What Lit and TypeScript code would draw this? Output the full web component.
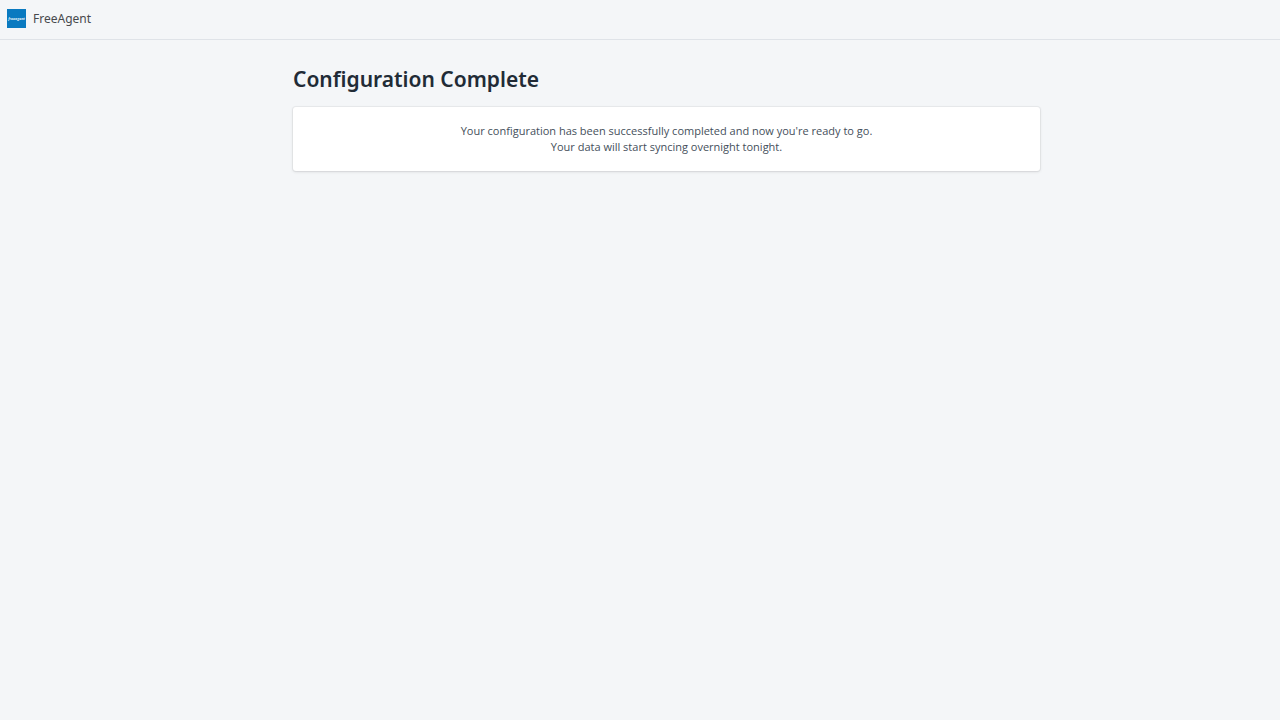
import { LitElement, html, css } from "lit";
import { customElement, property } from "lit/decorators.js";

@customElement("app-header")
class AppHeader extends LitElement {
  @property() name = "";

  static styles = css`
    :host {
      display: block;
    }
    .bar {
      display: flex;
      align-items: center;
      gap: 7px;
      padding: 8px 7px 10px;
      border-bottom: 1px solid #dfe3e8;
      color: #47494c;
      font-family: "Noto Sans", "Open Sans", sans-serif;
      font-size: 12px;
      line-height: 21px;
    }
    .logo {
      display: block;
      width: 19px;
      height: 19px;
    }
  `;

  render() {
    return html`
      <header class="bar">
        <svg class="logo" viewBox="0 0 19 19" aria-hidden="true">
          <rect width="19" height="19" fill="#0a7ac0" />
          <text x="9.5" y="10.5" text-anchor="middle" font-family="Open Sans, sans-serif" font-size="3.6" font-weight="700" font-style="italic" fill="#fff" fill-opacity="0.9">freeagent</text>
        </svg>
        <span>${this.name}</span>
      </header>
    `;
  }
}

@customElement("app-root")
class AppRoot extends LitElement {
  static styles = css`
    :host {
      display: block;
      min-height: 100vh;
      background: #f4f6f8;
      color: #454f5b;
      font-family: "Open Sans", "Noto Sans", sans-serif;
      font-size: 11px;
      line-height: 16px;
    }
    .page {
      max-width: 747px;
      margin: 0 auto;
      padding: 23px 0 24px 53px;
    }
    .title {
      margin: 0 0 12px;
      color: #212b36;
      font-family: "Noto Sans", "Open Sans", sans-serif;
      font-size: 21px;
      font-weight: 600;
      line-height: 32px;
    }
    .card {
      padding: 16px;
      border-radius: 3px;
      background: #fff;
      box-shadow: 0 0 0 1px rgba(63, 63, 68, 0.05), 0 1px 3px 0 rgba(63, 63, 68, 0.15);
      text-align: center;
    }
    .line {
      margin: 0;
    }
  `;

  render() {
    return html`
      <app-header name="FreeAgent"></app-header>
      <main class="page">
        <h1 class="title">Configuration Complete</h1>
        <section class="card">
          <p class="line">Your configuration has been successfully completed and now you're ready to go.</p>
          <p class="line">Your data will start syncing overnight tonight.</p>
        </section>
      </main>
    `;
  }
}
